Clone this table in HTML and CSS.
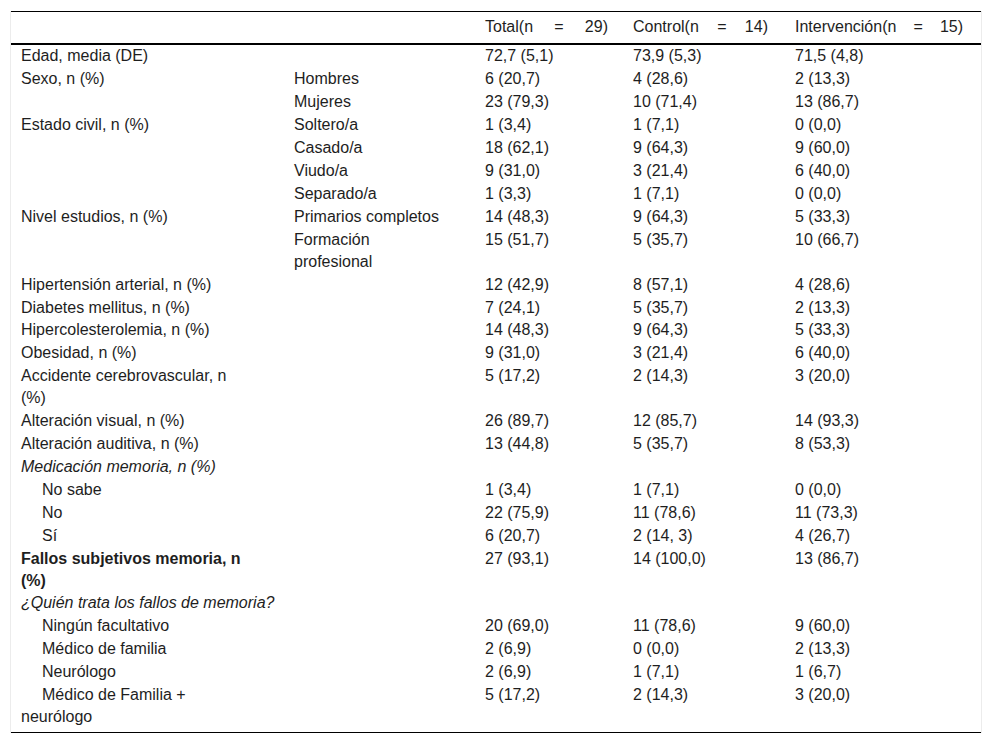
FILE: index.html
```html
<!DOCTYPE html>
<html lang="es">
<head>
<meta charset="utf-8">
<title>Tabla</title>
<link rel="stylesheet" href="styles.css">
</head>
<body>
<div class="wrap">
<table class="data">
  <colgroup>
    <col class="c1"><col class="c2"><col class="c3"><col class="c4"><col class="c5">
  </colgroup>
  <thead>
    <tr>
      <th class="k1"></th>
      <th class="k2"></th>
      <th class="k3 just">Total(n = 29)</th>
      <th class="k4 just">Control(n = 14)</th>
      <th class="k5 just">Intervención(n = 15)</th>
    </tr>
  </thead>
  <tbody>
    <tr><td class="k1">Edad, media (DE)</td><td class="k2"></td><td class="k3">72,7 (5,1)</td><td class="k4">73,9 (5,3)</td><td class="k5">71,5 (4,8)</td></tr>
    <tr><td class="k1">Sexo, n (%)</td><td class="k2">Hombres</td><td class="k3">6 (20,7)</td><td class="k4">4 (28,6)</td><td class="k5">2 (13,3)</td></tr>
    <tr><td class="k1"></td><td class="k2">Mujeres</td><td class="k3">23 (79,3)</td><td class="k4">10 (71,4)</td><td class="k5">13 (86,7)</td></tr>
    <tr><td class="k1">Estado civil, n (%)</td><td class="k2">Soltero/a</td><td class="k3">1 (3,4)</td><td class="k4">1 (7,1)</td><td class="k5">0 (0,0)</td></tr>
    <tr><td class="k1"></td><td class="k2">Casado/a</td><td class="k3">18 (62,1)</td><td class="k4">9 (64,3)</td><td class="k5">9 (60,0)</td></tr>
    <tr><td class="k1"></td><td class="k2">Viudo/a</td><td class="k3">9 (31,0)</td><td class="k4">3 (21,4)</td><td class="k5">6 (40,0)</td></tr>
    <tr><td class="k1"></td><td class="k2">Separado/a</td><td class="k3">1 (3,3)</td><td class="k4">1 (7,1)</td><td class="k5">0 (0,0)</td></tr>
    <tr><td class="k1">Nivel estudios, n (%)</td><td class="k2">Primarios completos</td><td class="k3">14 (48,3)</td><td class="k4">9 (64,3)</td><td class="k5">5 (33,3)</td></tr>
    <tr><td class="k1"></td><td class="k2">Formación profesional</td><td class="k3">15 (51,7)</td><td class="k4">5 (35,7)</td><td class="k5">10 (66,7)</td></tr>
    <tr><td class="k1">Hipertensión arterial, n (%)</td><td class="k2"></td><td class="k3">12 (42,9)</td><td class="k4">8 (57,1)</td><td class="k5">4 (28,6)</td></tr>
    <tr><td class="k1">Diabetes mellitus, n (%)</td><td class="k2"></td><td class="k3">7 (24,1)</td><td class="k4">5 (35,7)</td><td class="k5">2 (13,3)</td></tr>
    <tr><td class="k1">Hipercolesterolemia, n (%)</td><td class="k2"></td><td class="k3">14 (48,3)</td><td class="k4">9 (64,3)</td><td class="k5">5 (33,3)</td></tr>
    <tr><td class="k1">Obesidad, n (%)</td><td class="k2"></td><td class="k3">9 (31,0)</td><td class="k4">3 (21,4)</td><td class="k5">6 (40,0)</td></tr>
    <tr><td class="k1">Accidente cerebrovascular, n (%)</td><td class="k2"></td><td class="k3">5 (17,2)</td><td class="k4">2 (14,3)</td><td class="k5">3 (20,0)</td></tr>
    <tr><td class="k1">Alteración visual, n (%)</td><td class="k2"></td><td class="k3">26 (89,7)</td><td class="k4">12 (85,7)</td><td class="k5">14 (93,3)</td></tr>
    <tr><td class="k1">Alteración auditiva, n (%)</td><td class="k2"></td><td class="k3">13 (44,8)</td><td class="k4">5 (35,7)</td><td class="k5">8 (53,3)</td></tr>
    <tr><td class="k1 it" colspan="5">Medicación memoria, n (%)</td></tr>
    <tr><td class="k1 ind">No sabe</td><td class="k2"></td><td class="k3">1 (3,4)</td><td class="k4">1 (7,1)</td><td class="k5">0 (0,0)</td></tr>
    <tr><td class="k1 ind">No</td><td class="k2"></td><td class="k3">22 (75,9)</td><td class="k4">11 (78,6)</td><td class="k5">11 (73,3)</td></tr>
    <tr><td class="k1 ind">Sí</td><td class="k2"></td><td class="k3">6 (20,7)</td><td class="k4">2 (14, 3)</td><td class="k5">4 (26,7)</td></tr>
    <tr><td class="k1 bd">Fallos subjetivos memoria, n (%)</td><td class="k2"></td><td class="k3">27 (93,1)</td><td class="k4">14 (100,0)</td><td class="k5">13 (86,7)</td></tr>
    <tr><td class="k1 it" colspan="5">¿Quién trata los fallos de memoria?</td></tr>
    <tr><td class="k1 ind">Ningún facultativo</td><td class="k2"></td><td class="k3">20 (69,0)</td><td class="k4">11 (78,6)</td><td class="k5">9 (60,0)</td></tr>
    <tr><td class="k1 ind">Médico de familia</td><td class="k2"></td><td class="k3">2 (6,9)</td><td class="k4">0 (0,0)</td><td class="k5">2 (13,3)</td></tr>
    <tr><td class="k1 ind">Neurólogo</td><td class="k2"></td><td class="k3">2 (6,9)</td><td class="k4">1 (7,1)</td><td class="k5">1 (6,7)</td></tr>
    <tr class="last"><td class="k1 ind">Médico de Familia + neurólogo</td><td class="k2"></td><td class="k3">5 (17,2)</td><td class="k4">2 (14,3)</td><td class="k5">3 (20,0)</td></tr>
  </tbody>
</table>
</div>
</body>
</html>
```
FILE: styles.css
```css
html, body {
  margin: 0;
  padding: 0;
  background: #ffffff;
}

body {
  font-family: "Liberation Sans", Arial, sans-serif;
  font-size: 16px;
  color: #1e1e1e;
}

.wrap {
  margin: 11px 0 0 10px;
  width: 970px;
  border-left: 1px solid #ececec;
  border-right: 1px solid #ececec;
}

.data {
  width: 970px;
  table-layout: fixed;
  border-collapse: collapse;
  border-top: 1px solid #000000;
  border-bottom: 1px solid #000000;
}

.c1 { width: 273px; }
.c2 { width: 190px; }
.c3 { width: 148px; }
.c4 { width: 162px; }
.c5 { width: 197px; }

.data th,
.data td {
  font-weight: normal;
  line-height: 22px;
  vertical-align: top;
  text-align: left;
  padding: 0.46px 0;
}

.data thead th {
  padding-top: 4px;
  padding-bottom: 5px;
  border-bottom: 2px solid #000000;
}

.k1 { padding-left: 10px !important; padding-right: 35px !important; }
.k2 { padding-left: 10px !important; padding-right: 30px !important; }
.k3 { padding-left: 11px !important; padding-right: 14px !important; }
.k4 { padding-left: 11px !important; padding-right: 16px !important; }
.k5 { padding-left: 11px !important; padding-right: 18px !important; }

.just {
  text-align: justify !important;
  text-align-last: justify;
}

.it { font-style: italic; }
.bd { font-weight: bold !important; }
.ind { text-indent: 21px; }

.data tr.last td {
  padding-bottom: 4px;
}
```
